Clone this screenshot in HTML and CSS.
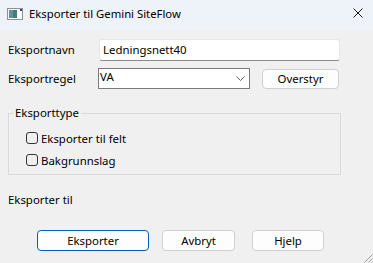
FILE: index.html
```html
<!DOCTYPE html>
<html lang="no">
<head>
    <meta charset="UTF-8">
    <meta name="viewport" content="width=device-width, initial-scale=1.0">
    <title>Eksporter til Gemini SiteFlow</title>
    <link rel="stylesheet" href="styles.css">
</head>
<body>

<div class="window">
    <div class="titlebar">
        <svg class="app-icon" width="16" height="12" viewBox="0 0 16 12">
            <rect x="0.5" y="0.5" width="15" height="11" fill="#f4f6f8" stroke="#8a939c"/>
            <rect x="2" y="2" width="8" height="8" fill="#3f7f78"/>
            <rect x="2" y="2" width="4" height="8" fill="#6c8d9a"/>
            <rect x="11" y="2" width="3" height="8" fill="#ffffff"/>
            <rect x="13" y="1" width="2" height="2" fill="#3a4650"/>
        </svg>
        <span class="title">Eksporter til Gemini SiteFlow</span>
        <svg class="close" width="10" height="10" viewBox="0 0 10 10">
            <path d="M0.5 0.5 L9.5 9.5 M9.5 0.5 L0.5 9.5" stroke="#1a1a1a" stroke-width="1"/>
        </svg>
    </div>

    <div class="content">
        <div class="row row-name">
            <span class="field-label">Eksportnavn</span>
            <div class="textbox">Ledningsnett40</div>
        </div>
        <div class="row row-rule">
            <span class="field-label">Eksportregel</span>
            <div class="combo">
                <span>VA</span>
                <svg class="chevron" width="9" height="5" viewBox="0 0 9 5">
                    <path d="M0.5 0.5 L4.5 4.5 L8.5 0.5" fill="none" stroke="#5a5a5a" stroke-width="1"/>
                </svg>
            </div>
            <button class="btn btn-override">Overstyr</button>
        </div>

        <fieldset class="group">
            <legend>Eksporttype</legend>
            <label class="check"><span class="box"></span>Eksporter til felt</label>
            <label class="check"><span class="box"></span>Bakgrunnslag</label>
        </fieldset>

        <div class="target-label">Eksporter til</div>

        <div class="actions">
            <button class="btn btn-default">Eksporter</button>
            <button class="btn btn-cancel">Avbryt</button>
            <button class="btn btn-help">Hjelp</button>
        </div>
    </div>

    <svg class="grip" width="11" height="11" viewBox="0 0 11 11">
        <path d="M10.5 2.5 L2.5 10.5 M10.5 6.5 L6.5 10.5 M10.5 9.5 L9.5 10.5" stroke="#a0a0a0" stroke-width="1"/>
    </svg>
</div>

</body>
</html>
```

FILE: styles.css
```css
html, body {
    margin: 0;
    padding: 0;
}
body {
    font-family: "Noto Sans", "Open Sans", sans-serif;
    font-size: 11.4px;
    color: #000;
    background: #f0f0f0;
}
.window {
    position: relative;
    width: 373px;
    height: 263px;
    overflow: hidden;
    background: #f0f0f0;
}
.titlebar {
    display: flex;
    align-items: center;
    height: 30px;
    background: #eef3f9;
    padding: 0 10px 0 7px;
    box-sizing: border-box;
}
.app-icon {
    margin-right: 6px;
    margin-top: -2px;
}
.title {
    flex: 1;
    font-size: 11.3px;
    line-height: 16px;
    margin-top: -2px;
}
.close {
    margin-top: -4px;
}
.content {
    padding: 9px 8px 0 8px;
}
.row {
    display: flex;
    align-items: center;
}
.row-rule {
    margin-top: 7px;
}
.field-label {
    width: 91px;
    line-height: 16px;
}
.row-rule .field-label {
    width: 90px;
}
.textbox {
    width: 241px;
    height: 22px;
    box-sizing: border-box;
    background: #fff;
    border: 1px solid #e6e6e6;
    border-bottom-color: #8a8a8a;
    border-radius: 3px;
    padding: 0 3px;
    line-height: 20px;
}
.combo {
    display: flex;
    align-items: center;
    justify-content: space-between;
    width: 152px;
    height: 21px;
    box-sizing: border-box;
    background: #fff;
    border: 1px solid #7a7a7a;
    padding: 0 4px 1px 1px;
    line-height: 16px;
}
.combo span {
    margin-top: -3px;
}
.chevron {
    margin-top: 1px;
}
.btn {
    font-family: inherit;
    font-size: 11.4px;
    color: #000;
    background: #fdfdfd;
    border: 1px solid #d0d0d0;
    border-radius: 4px;
    height: 21px;
    padding: 0;
    line-height: 18px;
    box-sizing: border-box;
}
.btn-override {
    width: 77px;
    height: 20px;
    margin-left: 12px;
}
.group {
    margin: 16px 0 0 0;
    width: 333px;
    box-sizing: border-box;
    border: 1px solid #dadada;
    padding: 6px 0 3px 4px;
}
.group legend {
    padding: 0 2px;
    line-height: 16px;
}
.check {
    display: flex;
    align-items: center;
    height: 22px;
    margin-left: 13px;
}
.box {
    width: 12px;
    height: 12px;
    box-sizing: border-box;
    border: 1px solid #333;
    border-radius: 3px;
    margin-right: 3px;
}
.target-label {
    margin-top: 17px;
    line-height: 16px;
}
.actions {
    display: flex;
    margin-top: 22px;
    padding-left: 29px;
}
.btn-default {
    width: 112px;
    border-color: #005fb8;
}
.btn-cancel {
    width: 73px;
    margin-left: 13px;
}
.btn-help {
    width: 72px;
    margin-left: 17px;
}
.grip {
    position: absolute;
    right: 0;
    bottom: 0;
}
```
